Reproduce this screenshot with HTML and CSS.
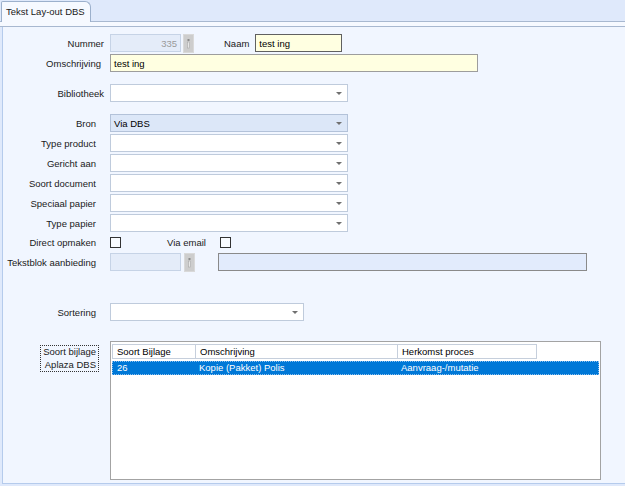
FILE: index.html
```html
<!DOCTYPE html>
<html>
<head>
<meta charset="utf-8">
<link rel="stylesheet" href="styles.css">
</head>
<body>
<div class="tabbar"><div class="tab">Tekst Lay-out DBS</div></div>
<div class="strip"></div>
<div class="panel">
  <div class="row">
    <span class="lbl lbl--w">Nummer</span>
    <div class="field field--num">335</div>
    <svg class="spin" viewBox="0 0 11 19" width="11" height="19"><rect x="0" y="0" width="11" height="19" fill="#cdcdcd"/><rect x="0.5" y="0.5" width="10" height="18" fill="none" stroke="#d9d9d9"/><rect x="4.5" y="5" width="2" height="2" fill="#8c8c8c"/><rect x="4.5" y="8" width="2" height="6" fill="#e6e6e6" stroke="#a0a0a0" stroke-width="0.5"/></svg>
    <span class="lbl-inline lbl-naam">Naam</span>
    <div class="field field--yellow field--naam">test ing</div>
  </div>
  <div class="row">
    <span class="lbl lbl--o">Omschrijving</span>
    <div class="field field--yellow field--omschr">test ing</div>
  </div>
  <div class="row row--gap">
    <span class="lbl lbl--w">Bibliotheek</span>
    <div class="combo"><span></span><i class="arrow"></i></div>
  </div>
  <div class="row row--gap">
    <span class="lbl">Bron</span>
    <div class="combo combo--active"><span>Via DBS</span><i class="arrow"></i></div>
  </div>
  <div class="row">
    <span class="lbl">Type product</span>
    <div class="combo"><span></span><i class="arrow"></i></div>
  </div>
  <div class="row">
    <span class="lbl">Gericht aan</span>
    <div class="combo"><span></span><i class="arrow"></i></div>
  </div>
  <div class="row">
    <span class="lbl">Soort document</span>
    <div class="combo"><span></span><i class="arrow"></i></div>
  </div>
  <div class="row">
    <span class="lbl">Speciaal papier</span>
    <div class="combo"><span></span><i class="arrow"></i></div>
  </div>
  <div class="row">
    <span class="lbl">Type papier</span>
    <div class="combo"><span></span><i class="arrow"></i></div>
  </div>
  <div class="row row--tight">
    <span class="lbl">Direct opmaken</span>
    <span class="check"></span>
    <span class="lbl-inline lbl-via">Via email</span>
    <span class="check"></span>
  </div>
  <div class="row">
    <span class="lbl">Tekstblok aanbieding</span>
    <div class="field field--num"></div>
    <svg class="spin spin--b" viewBox="0 0 11 19" width="11" height="19"><rect x="0" y="0" width="11" height="19" fill="#cdcdcd"/><rect x="0.5" y="0.5" width="10" height="18" fill="none" stroke="#d9d9d9"/><rect x="4.5" y="5" width="2" height="2" fill="#8c8c8c"/><rect x="4.5" y="8" width="2" height="6" fill="#e6e6e6" stroke="#a0a0a0" stroke-width="0.5"/></svg>
    <div class="field field--wide"></div>
  </div>
  <div class="row row--sort">
    <span class="lbl">Sortering</span>
    <div class="combo combo--short"><span></span><i class="arrow"></i></div>
  </div>
  <div class="attach">
    <div class="attach-label">Soort bijlage<br>Aplaza DBS</div>
    <div class="grid">
      <div class="thead">
        <div class="th th--1">Soort Bijlage</div>
        <div class="th th--2">Omschrijving</div>
        <div class="th th--3">Herkomst proces</div>
      </div>
      <div class="tr">
        <div class="td td--1">26</div>
        <div class="td td--2">Kopie (Pakket) Polis</div>
        <div class="td td--3">Aanvraag-/mutatie</div>
      </div>
    </div>
  </div>
</div>
</body>
</html>
```
FILE: styles.css
```css
* { box-sizing: border-box; }
body {
  margin: 0;
  width: 625px;
  height: 486px;
  overflow: hidden;
  background: #dfe9fb;
  font-family: "Liberation Sans", Arial, sans-serif;
  font-size: 9.5px;
  color: #1a1a1a;
}
.tabbar {
  height: 21px;
  display: flex;
  align-items: flex-end;
  padding-left: 1px;
}
.tab {
  position: relative;
  z-index: 1;
  width: 90px;
  height: 21px;
  margin-bottom: -1px;
  border: 1px solid #9cb0cc;
  border-bottom: none;
  border-radius: 2px 6px 0 0;
  background: #f6f9ff;
  padding: 4px 0 0 4px;
  line-height: 12px;
}
.strip {
  height: 6px;
  border-top: 1px solid #a8b8d0;
  border-bottom: 1px solid #a8b8d0;
  background: #f6f9ff;
}
.panel {
  margin-left: 2px;
  height: 457px;
  border-left: 1px solid #b5cbec;
  border-bottom: 1px solid #b5cbec;
  background: #f1f6ff;
  padding-top: 7px;
}
.row {
  display: flex;
  align-items: center;
  height: 18px;
  margin-top: 2px;
}
.row:first-child { margin-top: 0; }
.row--gap { margin-top: 12px; }
.row--tight { margin-top: 1px; }
.row--sort { margin-top: 32px; }
.lbl {
  flex: none;
  width: 107px;
  padding-right: 14px;
  text-align: right;
  white-space: nowrap;
}
.lbl--w { padding-right: 6px; }
.lbl--o { padding-right: 9px; }
.lbl-inline { white-space: nowrap; }
.lbl-naam { margin-left: 30px; margin-right: 6px; }
.lbl-via { margin-left: 46px; margin-right: 14px; }
.field {
  flex: none;
  height: 18px;
  border: 1px solid #9d9d9d;
  display: flex;
  align-items: center;
  padding: 0 3px;
  color: #000;
}
.field--num {
  width: 71px;
  background: #e4ecf9;
  border-color: #c6d3e6;
  color: #9a9a9a;
  justify-content: flex-end;
}
.field--yellow { background: #ffffe1; }
.field--naam { width: 87px; border-color: #606060; }
.field--omschr { width: 368px; }
.field--wide {
  width: 369px;
  margin-left: 23px;
  background: #e2ebfc;
  border-color: #8a8a8a;
}
.spin { flex: none; margin-left: 2px; display: block; }
.spin--b { margin-left: 3px; }
.combo {
  flex: none;
  width: 238px;
  height: 18px;
  border: 1px solid #bfcbdc;
  background: #fff;
  display: flex;
  align-items: center;
  justify-content: space-between;
  padding: 0 5px 0 3px;
  color: #000;
}
.combo--active { background: #dce7f8; border-color: #b3c2d9; }
.combo--short { width: 194px; }
.arrow {
  width: 0;
  height: 0;
  border-left: 3px solid transparent;
  border-right: 3px solid transparent;
  border-top: 3px solid #707070;
}
.check {
  flex: none;
  width: 11px;
  height: 11px;
  border: 1px solid #333;
  background: #f8fbff;
}
.attach {
  display: flex;
  align-items: flex-start;
  margin-top: 20px;
}
.attach-label {
  flex: none;
  margin-left: 37px;
  margin-top: 4px;
  width: 59px;
  height: 27px;
  border: 1px dotted #333;
  text-align: right;
  padding: 0 2px 0 0;
  line-height: 12.5px;
}
.grid {
  flex: none;
  margin-left: 11px;
  width: 491px;
  height: 139px;
  border: 1px solid #a3a3a3;
  background: #fff;
  padding: 2px 1px;
}
.thead { display: flex; height: 15px; }
.th {
  flex: none;
  height: 15px;
  border: 1px solid #c6cfdc;
  background: #fff;
  padding-left: 4px;
  line-height: 13px;
  color: #000;
}
.th + .th { margin-left: -1px; }
.th--1 { width: 84px; }
.th--2 { width: 203px; }
.th--3 { width: 140px; }
.tr {
  display: flex;
  margin-top: 2px;
  width: 487px;
  height: 14px;
  background: #0078d7;
  color: #fff;
  border: 1px dotted #8cc0ee;
  line-height: 12px;
}
.td { flex: none; padding-left: 4px; }
.td--1 { width: 82px; }
.td--2 { width: 202px; }
.td--3 { width: 140px; }
```
